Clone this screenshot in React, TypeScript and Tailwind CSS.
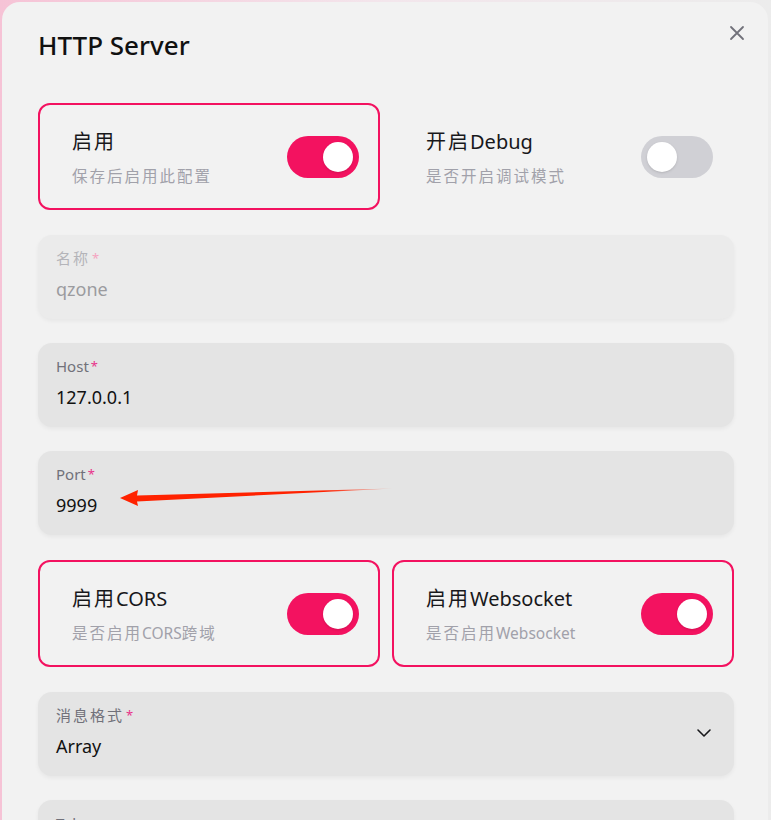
import React from "react";

type SwitchItem = {
  cn: string;
  en?: string;
  desc: string;
  descEn?: string;
  descTail?: string;
  on: boolean;
  outlined: boolean;
};

const font = { fontFamily: '"Noto Sans", "Noto Sans CJK SC", sans-serif' };

function Toggle({ on }: { on: boolean }) {
  return (
    <div
      className={`flex h-[42px] w-[72px] shrink-0 items-center rounded-full px-[6px] ${
        on ? "justify-end bg-[#f31260]" : "justify-start bg-[#d0d0d5]"
      }`}
    >
      <div className="size-[30px] rounded-full bg-white shadow-sm" />
    </div>
  );
}

function SwitchCard({ item }: { item: SwitchItem }) {
  return (
    <div
      className={`flex h-[107px] items-center justify-between rounded-[12px] border-2 pl-[32px] pr-[19px] ${
        item.outlined ? "border-[#f31260]" : "border-transparent"
      }`}
    >
      <div className="mt-[2px] flex flex-col gap-[11px]">
        <div className="text-[20px] leading-[26px] text-[#18181b]">
          <span className="tracking-[2px]">{item.cn}</span>
          {item.en}
        </div>
        <div className="text-[15.5px] leading-[20px] text-[#a1a1aa]">
          <span className="tracking-[2px]">{item.desc}</span>
          {item.descEn}
          {item.descTail && <span className="tracking-[2px]">{item.descTail}</span>}
        </div>
      </div>
      <Toggle on={item.on} />
    </div>
  );
}

function Field({
  label,
  cn,
  value,
  disabled,
  select,
  required = true,
  className = "",
  children,
}: {
  label: string;
  cn?: boolean;
  value: string;
  disabled?: boolean;
  select?: boolean;
  required?: boolean;
  className?: string;
  children?: React.ReactNode;
}) {
  return (
    <div
      className={`relative flex h-[84px] shrink-0 items-center rounded-[14px] pl-[18px] pr-[22px] shadow-[0_2px_4px_rgba(0,0,0,0.05)] ${
        disabled ? "bg-[#ebebeb]" : "bg-[#e4e4e4]"
      } ${className}`}
    >
      <div className="flex flex-1 flex-col gap-[10px] self-start pt-[13px]">
        <div
          className={`flex items-center text-[15px] leading-[20px] ${
            disabled ? "text-[#b4b4b9]" : "text-[#71717a]"
          }`}
        >
          <span className={cn ? "tracking-[2px]" : ""}>{label}</span>
          {required && (
            <span className={`ml-[2px] text-[13px] ${disabled ? "text-[#f5a3c0]" : "text-[#e8338a]"}`}>*</span>
          )}
        </div>
        <div className={`text-[18px] leading-[22px] ${disabled ? "text-[#9b9b9f]" : "text-[#111]"}`}>{value}</div>
      </div>
      {select && (
        <svg width="16" height="10" viewBox="0 0 16 10" fill="none" className="mt-[-2px]">
          <path d="M2 2l6 6 6-6" stroke="#18181b" strokeWidth="1.6" strokeLinecap="round" strokeLinejoin="round" />
        </svg>
      )}
      {children}
    </div>
  );
}

export default function App() {
  const row1: SwitchItem[] = [
    { cn: "启用", desc: "保存后启用此配置", on: true, outlined: true },
    { cn: "开启", en: "Debug", desc: "是否开启调试模式", on: false, outlined: false },
  ];
  const row2: SwitchItem[] = [
    { cn: "启用", en: "CORS", desc: "是否启用", descEn: "CORS", descTail: "跨域", on: true, outlined: true },
    { cn: "启用", en: "Websocket", desc: "是否启用", descEn: "Websocket", on: true, outlined: true },
  ];

  return (
    <div
      className="h-[820px] w-[771px] overflow-hidden bg-gradient-to-r from-[#f6c3d6] via-[#f3e6ec] to-[#ececec] pl-[2px] pt-[2px]"
      style={font}
    >
      <div className="relative h-[830px] w-[766px] rounded-t-[18px] bg-[#f2f2f2] pl-[36px] pr-[34px] pt-[27px]">
        <button className="absolute right-[20px] top-[20px] p-[2px]">
          <svg width="18" height="18" viewBox="0 0 18 18" fill="none">
            <path d="M3 3l12 12M15 3L3 15" stroke="#71717a" strokeWidth="1.8" strokeLinecap="round" />
          </svg>
        </button>

        <h2 className="text-[26px] font-medium leading-[32px] text-[#111]">HTTP Server</h2>

        <div className="mt-[42px] flex flex-col gap-[24px]">
          <div className="grid grid-cols-2 gap-[12px]">
            {row1.map((it) => (
              <SwitchCard key={it.cn + it.en} item={it} />
            ))}
          </div>

          <Field label="名称" cn value="qzone" disabled className="mt-[1px]" />
          <Field label="Host" value="127.0.0.1" />
          <Field label="Port" value="9999">
            <svg
              className="pointer-events-none absolute left-[80px] top-[36px]"
              width="280"
              height="22"
              viewBox="0 0 280 22"
            >
              <defs>
                <linearGradient id="tail" x1="0" x2="1" y1="0" y2="0">
                  <stop offset="0.75" stopColor="#ff2200" />
                  <stop offset="1" stopColor="#ff2200" stopOpacity="0.15" />
                </linearGradient>
              </defs>
              <polygon points="2,11 20,3 19,8.5 275,1.5 19,14.5 20,19" fill="url(#tail)" />
            </svg>
          </Field>

          <div className="mt-[1px] grid grid-cols-2 gap-[12px]">
            {row2.map((it) => (
              <SwitchCard key={it.cn + it.en} item={it} />
            ))}
          </div>

          <Field label="消息格式" cn value="Array" select className="mt-[1px]" />
          <Field label="Token" value="" required={false} />
        </div>
      </div>
    </div>
  );
}
